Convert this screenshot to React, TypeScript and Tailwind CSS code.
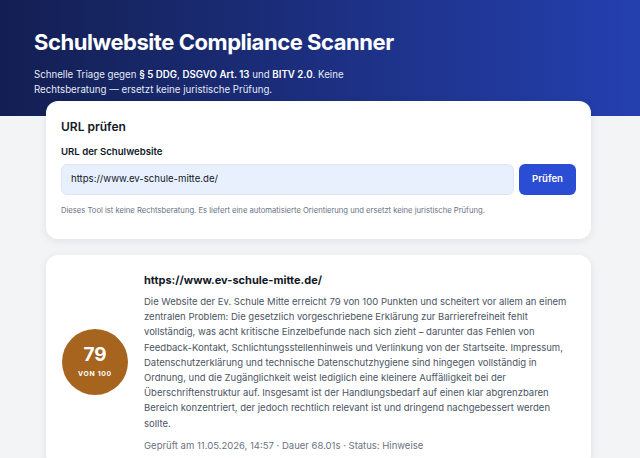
export default function App() {
  return (
    <div className="min-h-[458px] bg-[#f3f4f6] font-['Inter',sans-serif] text-[#111827]">
      <header className="bg-gradient-to-r from-[#131f52] via-[#1c2f80] to-[#2440b0] pl-[34px] pt-[28px] pb-[30px] h-[116px]">
        <h1 className="text-[22px] font-bold leading-[28px] tracking-[-0.45px] text-white">
          Schulwebsite Compliance Scanner
        </h1>
        <p className="mt-[11px] w-[320px] text-[9.7px] leading-[15px] text-[#e5e9f7]">
          Schnelle Triage gegen <strong className="font-semibold text-white">§ 5 DDG</strong>,{' '}
          <strong className="font-semibold text-white">DSGVO Art. 13</strong> und{' '}
          <strong className="font-semibold text-white">BITV 2.0</strong>. Keine Rechtsberatung — ersetzt keine
          juristische Prüfung.
        </p>
      </header>

      <main className="ml-[46px] w-[545px] -mt-[15px] flex flex-col gap-[16px] pb-4">
        <section className="rounded-[12px] bg-white px-[15px] pt-[17px] pb-[22px] shadow-[0_2px_8px_rgba(15,23,42,0.08)]">
          <h2 className="text-[12px] font-semibold leading-[18px]">URL prüfen</h2>
          <label className="mt-[9px] block text-[9.6px] font-semibold leading-[14px]">URL der Schulwebsite</label>
          <div className="mt-[5px] flex gap-[5px]">
            <div className="flex h-[31px] flex-1 items-center rounded-[6px] border border-[#dfe5ef] bg-[#e8f0fe] px-[9px] text-[9.6px] text-[#111827]">
              https://www.ev-schule-mitte.de/
            </div>
            <button className="h-[31px] w-[57px] rounded-[6px] bg-[#2a4dd3] text-[9.6px] font-semibold text-white">
              Prüfen
            </button>
          </div>
          <p className="mt-[10px] text-[7.65px] leading-[12px] text-[#6b7280]">
            Dieses Tool ist keine Rechtsberatung. Es liefert eine automatisierte Orientierung und ersetzt keine juristische Prüfung.
          </p>
        </section>

        <section className="flex items-center gap-[16px] rounded-[12px] bg-white pl-[16px] pr-[20px] pt-[16px] pb-[14px] shadow-[0_2px_8px_rgba(15,23,42,0.08)]">
          <div className="flex h-[66px] w-[66px] shrink-0 flex-col items-center justify-center rounded-full bg-[#a6641f] text-white">
            <span className="text-[19px] font-bold leading-[22px]">79</span>
            <span className="mt-[3px] text-[6.8px] font-bold tracking-[0.7px]">VON 100</span>
          </div>
          <div className="flex-1">
            <h3 className="text-[11px] font-bold leading-[18px]">https://www.ev-schule-mitte.de/</h3>
            <p className="mt-[5px] text-[9.5px] leading-[15.2px] text-[#4b5563]">
              Die Website der Ev. Schule Mitte erreicht 79 von 100 Punkten und scheitert vor allem an einem zentralen
              Problem: Die gesetzlich vorgeschriebene Erklärung zur Barrierefreiheit fehlt vollständig, was acht
              kritische Einzelbefunde nach sich zieht – darunter das Fehlen von Feedback-Kontakt,
              Schlichtungsstellenhinweis und Verlinkung von der Startseite. Impressum, Datenschutzerklärung und technische
              Datenschutzhygiene sind hingegen vollständig in Ordnung, und die Zugänglichkeit weist lediglich eine
              kleinere Auffälligkeit bei der Überschriftenstruktur auf. Insgesamt ist der Handlungsbedarf auf einen klar
              abgrenzbaren Bereich konzentriert, der jedoch rechtlich relevant ist und dringend nachgebessert werden
              sollte.
            </p>
            <p className="mt-[8px] text-[9.5px] leading-[14px] text-[#6b7280]">
              Geprüft am 11.05.2026, 14:57 · Dauer 68.01s · Status: Hinweise
            </p>
          </div>
        </section>
      </main>
    </div>
  );
}
